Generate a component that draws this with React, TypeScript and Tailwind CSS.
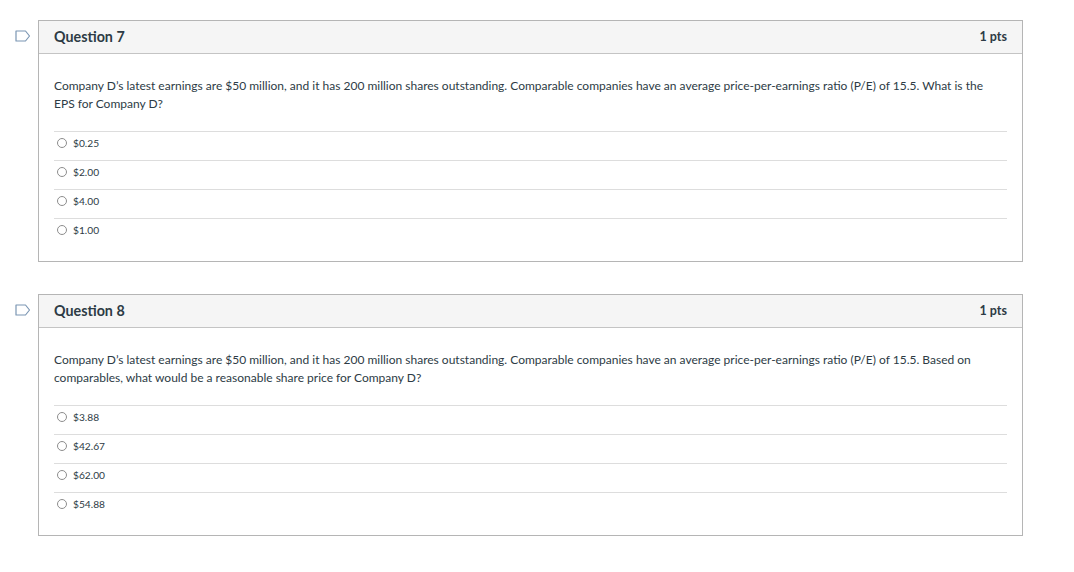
import React from "react";

type Q = { n: number; text: string; answers: string[] };

const questions: Q[] = [
  {
    n: 7,
    text:
      "Company D’s latest earnings are $50 million, and it has 200 million shares outstanding. Comparable companies have an average price-per-earnings ratio (P/E) of 15.5. What is the EPS for Company D?",
    answers: ["$0.25", "$2.00", "$4.00", "$1.00"],
  },
  {
    n: 8,
    text:
      "Company D’s latest earnings are $50 million, and it has 200 million shares outstanding. Comparable companies have an average price-per-earnings ratio (P/E) of 15.5. Based on comparables, what would be a reasonable share price for Company D?",
    answers: ["$3.88", "$42.67", "$62.00", "$54.88"],
  },
];

function Flag() {
  return (
    <svg width="16" height="12" viewBox="0 0 16 12" className="block">
      <path
        d="M1 1 H10.5 L14.5 6 L10.5 11 H1 Z"
        fill="none"
        stroke="#7b96b3"
        strokeWidth="1.2"
        strokeLinejoin="round"
      />
    </svg>
  );
}

function Question({ q }: { q: Q }) {
  return (
    <div className="flex">
      <div className="w-[38px] shrink-0 pl-[15px] pt-[10px]">
        <Flag />
      </div>
      <div className="w-[985px] border border-[#b5b5b5] bg-white">
        <div className="h-[33px] bg-[#f5f5f5] border-b border-[#c4c4c4] pl-[15px] pr-[15px] flex items-center justify-between">
          <span className="text-[14.3px] font-bold text-[#2d3b45]">Question {q.n}</span>
          <span className="text-[12.5px] font-bold text-[#2d3b45]">1 pts</span>
        </div>
        <div className="px-[15px] pt-[23px] pb-[14px]">
          <p className="text-[12px] leading-[18px] text-[#2d3b45] pr-[10px]">{q.text}</p>
          <div className="mt-[18px]">
            {q.answers.map((a) => (
              <div
                key={a}
                className="h-[29px] border-t border-[#dddddd] flex items-start pt-[5px] pl-[3px] gap-[6px]"
              >
                <span className="mt-[1px] w-[10px] h-[10px] rounded-full border border-[#8d8d8d] bg-white" />
                <span className="text-[10.2px] leading-[12px] text-[#2d3b45]">{a}</span>
              </div>
            ))}
          </div>
        </div>
      </div>
    </div>
  );
}

export default function App() {
  return (
    <div
      className="w-[1074px] h-[572px] bg-white pt-[20px] flex flex-col gap-[32px]"
      style={{ fontFamily: "Lato, 'Noto Sans', sans-serif" }}
    >
      {questions.map((q) => (
        <Question key={q.n} q={q} />
      ))}
    </div>
  );
}
